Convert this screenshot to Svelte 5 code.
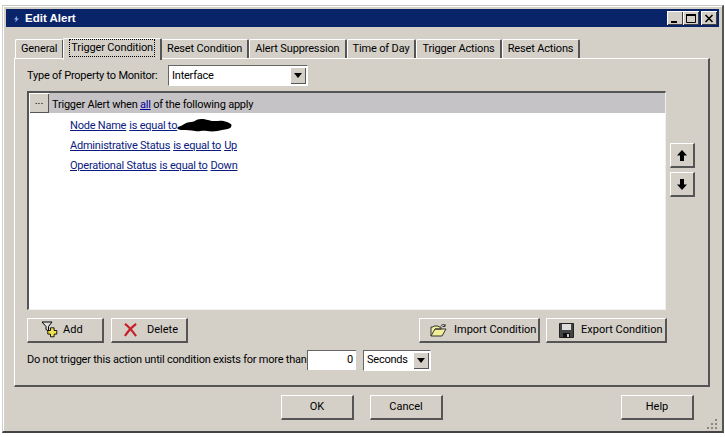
<script>
  const tabs = ['General', 'Trigger Condition', 'Reset Condition', 'Alert Suppression', 'Time of Day', 'Trigger Actions', 'Reset Actions'];
</script>

<div class="win">
  <div class="title">
    <svg class="appicon" width="12" height="12" viewBox="0 0 12 12"><path d="M7 4 4 7.500h2L5 10.500l4-4H7z" fill="#8fa8f0"/></svg>
    <span>Edit Alert</span>
    <div class="caps">
      <div class="cap"><svg width="12" height="11" viewBox="0 0 12 11"><path d="M2 8h6v2H2z" fill="#000"/></svg></div>
      <div class="cap"><svg width="12" height="11" viewBox="0 0 12 11"><path d="M1.500 2h9v7.500h-9z" fill="none" stroke="#000"/><path d="M1 1h10v2H1z"/></svg></div>
      <div class="cap x"><svg width="12" height="11" viewBox="0 0 12 11"><path d="M2.500 2l7 7M9.500 2l-7 7" stroke="#000" stroke-width="1.600" fill="none"/></svg></div>
    </div>
  </div>

  <div class="tabs">
    {#each tabs as t, i}
      <div class="tab" class:active={i === 1}><span>{t}</span></div>
    {/each}
  </div>

  <div class="panel">
    <div class="proprow">
      <span class="proplabel">Type of Property to Monitor:</span>
      <div class="select wide"><span class="val">Interface</span><div class="arrow"><i></i></div></div>
    </div>

    <div class="editor">
      <div class="listbox">
        <div class="head">
          <button class="dots">...</button>
          <span class="headtext">Trigger Alert when <a href="#all">all</a> of the following apply</span>
        </div>
        <div class="conds">
          <div class="cond"><a href="#n">Node Name</a> <a href="#e">is equal to</a><svg class="blot" width="56" height="14" viewBox="0 0 56 14"><path d="M1 9c6-2 8-5 13-5s4-3 10-3 8 2 13 2 8-1 13 1 5 3 4 5-5 2-9 3-9 2-15 1-7 1-12 0-8-1-12-1-7-1-5-3z" fill="#000"/></svg></div>
          <div class="cond"><a href="#a">Administrative Status</a> <a href="#e">is equal to</a> <a href="#u">Up</a></div>
          <div class="cond"><a href="#o">Operational Status</a> <a href="#e">is equal to</a> <a href="#d">Down</a></div>
        </div>
      </div>
      <div class="updown">
        <button class="btn sq"><svg width="12" height="13" viewBox="0 0 12 13"><path d="M6 1 11 6.500H8V12H4V6.500H1z" fill="#000"/></svg></button>
        <button class="btn sq"><svg width="12" height="13" viewBox="0 0 12 13"><path d="M6 12 11 6.500H8V1H4V6.500H1z" fill="#000"/></svg></button>
      </div>
    </div>

    <div class="actions">
      <button class="btn add">
        <svg width="18" height="18" viewBox="0 0 18 18"><path d="M1 1h10L7.500 5.500V10L5 8.500v-3z" fill="#ddd" stroke="#000"/><path d="M10 7h4v3h3v4h-3v3h-4v-3H7v-4h3z" fill="#f2e34c" stroke="#000" transform="translate(.5 .5) scale(.9)"/></svg>
        <span>Add</span>
      </button>
      <button class="btn del">
        <svg width="15" height="14" viewBox="0 0 16 15"><path d="M2 1c3 2 9 9 12 13M14 1C10 4 5 9 2 14" stroke="#c81e28" stroke-width="2.200" fill="none"/></svg>
        <span>Delete</span>
      </button>
      <div class="spacer"></div>
      <button class="btn imp">
        <svg width="18" height="15" viewBox="0 0 18 15"><path d="M1 13V4h2l1-1h4l1 1h2v2H5L1 13h11l4-7H5" fill="#f3ee9a" stroke="#333" stroke-width="1"/><path d="M11 2.500c2-1.500 3.500-1 4 .5m0-2v2.500h-2.500" fill="none" stroke="#333"/></svg>
        <span>Import Condition</span>
      </button>
      <button class="btn exp">
        <svg width="15" height="15" viewBox="0 0 15 15"><path d="M.500.500h14v14H.500z" fill="#444" stroke="#222"/><path d="M3 1h9v6H3z" fill="#ddd"/><path d="M4 10h7v4.500H4z" fill="#111"/><path d="M8 11h2v3H8z" fill="#ccc"/></svg>
        <span>Export Condition</span>
      </button>
    </div>

    <div class="delay">
      <span class="delaylabel">Do not trigger this action until condition exists for more than</span>
      <div class="num">0</div>
      <div class="select small"><span class="val">Seconds</span><div class="arrow"><i></i></div></div>
    </div>
  </div>

  <div class="footer">
    <button class="btn dlg">OK</button>
    <button class="btn dlg cancel">Cancel</button>
    <div class="spacer"></div>
    <button class="btn dlg">Help</button>
    <svg class="grip" width="12" height="12" viewBox="0 0 12 12"><g fill="#8a8780"><path d="M9 1h2v2H9zM5 5h2v2H5zM9 5h2v2H9zM1 9h2v2H1zM5 9h2v2H5zM9 9h2v2H9z"/></g></svg>
  </div>
</div>

<style>
  :global(body) { margin: 0; background: #fff; }
  .win {
    box-sizing: border-box; width: 722px; height: 428px; margin-top: 5px; margin-left: 2px;
    background: #d4d0c8; position: relative;
    border-top: 1px solid #c8c8c8; border-left: 1px solid #d0d0d0; border-right: 2px solid #555; border-bottom: 2px solid #444;
    box-shadow: inset 1px 1px 0 #fff;
    padding: 3px 3px 0;
    font: 11px/14px Roboto, "Liberation Sans", Arial, sans-serif; letter-spacing: -0.22px; color: #000;
    display: flex; flex-direction: column;
  }
  .title {
    height: 18px; background: #0a246a; color: #fff; font-weight: bold; font-size: 11.5px; letter-spacing: 0;
    font-family: "Liberation Sans", Arial, sans-serif;
    display: flex; align-items: center; padding: 0 2px 0 4px; flex: none;
  }
  .appicon { margin-right: 3px; }
  .caps { margin-left: auto; display: flex; }
  .cap {
    width: 16px; height: 14px; background: #d4d0c8; display: flex; align-items: center; justify-content: center;
    box-shadow: inset 1px 1px 0 #fff, inset -1px -1px 0 #404040;
  }
  .cap.x { margin-left: 2px; }
  .tabs { display: flex; align-items: flex-end; height: 32px; padding-left: 9px; flex: none; position: relative; z-index: 1; margin-bottom: -1px; letter-spacing: -0.15px; }
  .tab {
    height: 19px; padding: 0 5px; display: flex; align-items: center; margin-bottom: 1px;
    border-top: 1px solid #fff; border-left: 1px solid #fff; border-right: 2px solid #555;
    border-radius: 2px 2px 0 0; box-sizing: border-box; white-space: nowrap;
  }
  .tab.active { height: 22px; margin: 0 -1px -1px -1px; background: #d4d0c8; padding: 0 6px 3px; position: relative; z-index: 2; }
  .tab.active span { outline: 1px dotted #000; padding: 1px 1px; }
  .panel {
    box-sizing: border-box; height: 329px; margin: 0 9px 0 8px; flex: none;
    border-top: 1px solid #fff; border-left: 1px solid #fff; border-right: 2px solid #555; border-bottom: 2px solid #555;
    padding: 6px 10px 0 12px;
  }
  .proprow { display: flex; align-items: center; height: 21px; }
  .proplabel { width: 141px; white-space: nowrap; }
  .select {
    box-sizing: border-box; display: flex; align-items: center; background: #fff; height: 21px;
    border-top: 1px solid #666; border-left: 1px solid #666; border-right: 1px solid #fff; border-bottom: 1px solid #fff;
    padding: 1px;
  }
  .select .val { flex: 1; padding-left: 2px; white-space: nowrap; }
  .select.wide { width: 140px; }
  .select.small { width: 68px; margin-left: 7px; }
  .arrow {
    width: 16px; height: 17px; background: #d4d0c8; display: flex; align-items: center; justify-content: center;
    box-shadow: inset 1px 1px 0 #fff, inset -1px -1px 0 #555;
  }
  .arrow i { width: 0; height: 0; border: 4px solid transparent; border-top: 5px solid #000; border-bottom: 0; }
  .editor { display: flex; margin-top: 5px; }
  .listbox {
    box-sizing: border-box; width: 639px; height: 219px; background: #fff;
    border-top: 2px solid #555; border-left: 2px solid #555; border-right: 1px solid #f0f0f0; border-bottom: 1px solid #f0f0f0;
  }
  .head { height: 20px; background: #c6c3c6; display: flex; align-items: center; gap: 3px; }
  .headtext { padding-top: 4px; }
  .dots {
    width: 20px; height: 20px; padding: 0 0 4px; font: inherit; background: #d4d0c8; border: 0;
    box-shadow: inset 1px 1px 0 #fff, inset -1px -1px 0 #555;
  }
  .head a { color: #0000a0; }
  .conds { padding-top: 3px; }
  .cond { height: 20px; padding-left: 41px; display: flex; align-items: center; gap: 3px; white-space: pre; }
  .cond a { color: #0a1a80; }
  .blot { margin-left: -3px; margin-top: -3px; }
  .updown { margin-left: 4px; padding-top: 52px; display: flex; flex-direction: column; gap: 4px; }
  .btn {
    font: inherit; color: #000; background: #d4d0c8; border: 0; padding: 0;
    border-top: 1px solid #fff; border-left: 1px solid #fff; border-right: 2px solid #555; border-bottom: 2px solid #555;
    display: flex; align-items: center; justify-content: center; box-sizing: border-box;
  }
  .sq { width: 25px; height: 25px; }
  .actions { display: flex; margin-top: 8px; height: 25px; width: 640px; }
  .spacer { flex: 1; }
  .add { width: 77px; justify-content: flex-start; padding-left: 13px; gap: 4px; }
  .del { width: 77px; margin-left: 7px; justify-content: flex-start; padding-left: 11px; gap: 9px; }
  .imp { width: 121px; padding-left: 10px; gap: 6px; justify-content: flex-start; }
  .exp { width: 121px; margin-left: 6px; padding-left: 12px; gap: 7px; justify-content: flex-start; }
  .imp span { white-space: nowrap; }
  .exp span { white-space: nowrap; }
  .delay { display: flex; align-items: center; margin-top: 7px; height: 20px; white-space: nowrap; }
  .delaylabel { width: 280px; }
  .num {
    box-sizing: border-box; width: 49px; height: 20px; background: #fff; text-align: right; padding: 2px 3px;
    border-top: 1px solid #666; border-left: 1px solid #666;
  }
  .footer { display: flex; align-items: flex-start; padding: 8px 25px 0 275px; position: relative; flex: 1; }
  .dlg { width: 73px; height: 25px; }
  .cancel { margin-left: 16px; }
  .grip { position: absolute; right: 1px; bottom: 1px; }
</style>
